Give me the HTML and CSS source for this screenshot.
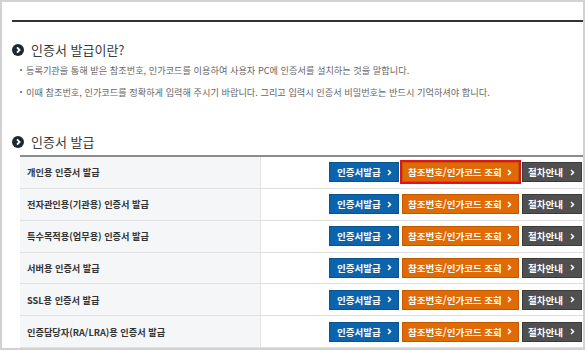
FILE: index.html
```html
<!DOCTYPE html>
<html lang="ko">
<head>
    <meta charset="utf-8">
    <title>인증서 발급</title>
    <link rel="stylesheet" href="styles.css">
</head>
<body>
    <div class="page">
        <div class="topline"></div>

        <h2 class="title">
            <svg class="title-icon" width="12" height="12" viewBox="0 0 12 12"><circle cx="6" cy="6" r="6" fill="#1f2731"/><path d="M5 3.4 L7.6 6 L5 8.6" fill="none" stroke="#fff" stroke-width="1.8"/></svg>
            인증서 발급이란?
        </h2>
        <ul class="notes">
            <li>등록기관을 통해 받은 참조번호, 인가코드를 이용하여 사용자 PC에 인증서를 설치하는 것을 말합니다.</li>
            <li>이때 참조번호, 인가코드를 정확하게 입력해 주시기 바랍니다. 그리고 입력시 인증서 비밀번호는 반드시 기억하셔야 합니다.</li>
        </ul>

        <h2 class="title second">
            <svg class="title-icon" width="12" height="12" viewBox="0 0 12 12"><circle cx="6" cy="6" r="6" fill="#1f2731"/><path d="M5 3.4 L7.6 6 L5 8.6" fill="none" stroke="#fff" stroke-width="1.8"/></svg>
            인증서 발급
        </h2>

        <div class="cert-list">
            <div class="cert-row">
                <div class="cert-name">개인용 인증서 발급</div>
                <div class="cert-btns">
                    <a class="btn blue">인증서발급 <svg width="5" height="7" viewBox="0 0 5 7"><path d="M1 1 L3.5 3.5 L1 6" fill="none" stroke="#fff" stroke-width="1.5"/></svg></a>
                    <a class="btn orange selected">참조번호/인가코드 조회 <svg width="5" height="7" viewBox="0 0 5 7"><path d="M1 1 L3.5 3.5 L1 6" fill="none" stroke="#fff" stroke-width="1.5"/></svg></a>
                    <a class="btn gray">절차안내 <svg width="5" height="7" viewBox="0 0 5 7"><path d="M1 1 L3.5 3.5 L1 6" fill="none" stroke="#fff" stroke-width="1.5"/></svg></a>
                </div>
            </div>
            <div class="cert-row">
                <div class="cert-name">전자관인용(기관용) 인증서 발급</div>
                <div class="cert-btns">
                    <a class="btn blue">인증서발급 <svg width="5" height="7" viewBox="0 0 5 7"><path d="M1 1 L3.5 3.5 L1 6" fill="none" stroke="#fff" stroke-width="1.5"/></svg></a>
                    <a class="btn orange">참조번호/인가코드 조회 <svg width="5" height="7" viewBox="0 0 5 7"><path d="M1 1 L3.5 3.5 L1 6" fill="none" stroke="#fff" stroke-width="1.5"/></svg></a>
                    <a class="btn gray">절차안내 <svg width="5" height="7" viewBox="0 0 5 7"><path d="M1 1 L3.5 3.5 L1 6" fill="none" stroke="#fff" stroke-width="1.5"/></svg></a>
                </div>
            </div>
            <div class="cert-row">
                <div class="cert-name">특수목적용(업무용) 인증서 발급</div>
                <div class="cert-btns">
                    <a class="btn blue">인증서발급 <svg width="5" height="7" viewBox="0 0 5 7"><path d="M1 1 L3.5 3.5 L1 6" fill="none" stroke="#fff" stroke-width="1.5"/></svg></a>
                    <a class="btn orange">참조번호/인가코드 조회 <svg width="5" height="7" viewBox="0 0 5 7"><path d="M1 1 L3.5 3.5 L1 6" fill="none" stroke="#fff" stroke-width="1.5"/></svg></a>
                    <a class="btn gray">절차안내 <svg width="5" height="7" viewBox="0 0 5 7"><path d="M1 1 L3.5 3.5 L1 6" fill="none" stroke="#fff" stroke-width="1.5"/></svg></a>
                </div>
            </div>
            <div class="cert-row">
                <div class="cert-name">서버용 인증서 발급</div>
                <div class="cert-btns">
                    <a class="btn blue">인증서발급 <svg width="5" height="7" viewBox="0 0 5 7"><path d="M1 1 L3.5 3.5 L1 6" fill="none" stroke="#fff" stroke-width="1.5"/></svg></a>
                    <a class="btn orange">참조번호/인가코드 조회 <svg width="5" height="7" viewBox="0 0 5 7"><path d="M1 1 L3.5 3.5 L1 6" fill="none" stroke="#fff" stroke-width="1.5"/></svg></a>
                    <a class="btn gray">절차안내 <svg width="5" height="7" viewBox="0 0 5 7"><path d="M1 1 L3.5 3.5 L1 6" fill="none" stroke="#fff" stroke-width="1.5"/></svg></a>
                </div>
            </div>
            <div class="cert-row">
                <div class="cert-name">SSL용 인증서 발급</div>
                <div class="cert-btns">
                    <a class="btn blue">인증서발급 <svg width="5" height="7" viewBox="0 0 5 7"><path d="M1 1 L3.5 3.5 L1 6" fill="none" stroke="#fff" stroke-width="1.5"/></svg></a>
                    <a class="btn orange">참조번호/인가코드 조회 <svg width="5" height="7" viewBox="0 0 5 7"><path d="M1 1 L3.5 3.5 L1 6" fill="none" stroke="#fff" stroke-width="1.5"/></svg></a>
                    <a class="btn gray">절차안내 <svg width="5" height="7" viewBox="0 0 5 7"><path d="M1 1 L3.5 3.5 L1 6" fill="none" stroke="#fff" stroke-width="1.5"/></svg></a>
                </div>
            </div>
            <div class="cert-row">
                <div class="cert-name">인증담당자(RA/LRA)용 인증서 발급</div>
                <div class="cert-btns">
                    <a class="btn blue">인증서발급 <svg width="5" height="7" viewBox="0 0 5 7"><path d="M1 1 L3.5 3.5 L1 6" fill="none" stroke="#fff" stroke-width="1.5"/></svg></a>
                    <a class="btn orange">참조번호/인가코드 조회 <svg width="5" height="7" viewBox="0 0 5 7"><path d="M1 1 L3.5 3.5 L1 6" fill="none" stroke="#fff" stroke-width="1.5"/></svg></a>
                    <a class="btn gray">절차안내 <svg width="5" height="7" viewBox="0 0 5 7"><path d="M1 1 L3.5 3.5 L1 6" fill="none" stroke="#fff" stroke-width="1.5"/></svg></a>
                </div>
            </div>
        </div>
    </div>
</body>
</html>
```

FILE: styles.css
```css
body {
    margin: 0;
    font-family: "Noto Sans CJK KR", "Noto Sans", sans-serif;
    background: #fff;
}
.page {
    width: 585px;
    height: 350px;
    box-sizing: border-box;
    border: 2px solid #d2d2d2;
    padding: 18px 0 0 10px;
    display: flex;
    flex-direction: column;
}
.topline {
    height: 2px;
    background: #333;
}
.title {
    display: flex;
    align-items: center;
    gap: 7px;
    margin: 20px 0 0 0;
    height: 16px;
    font-size: 13px;
    font-weight: normal;
    color: #3b3b3b;
    line-height: 16px;
}
.title.second {
    margin-top: 31px;
}
.title-icon {
    flex: none;
}
.notes {
    list-style: none;
    margin: 1px 0 0 0;
    padding: 0 0 0 8px;
}
.notes li {
    position: relative;
    padding-left: 6px;
    font-size: 9.2px;
    line-height: 22px;
    color: #666;
}
.notes li:before {
    content: "";
    position: absolute;
    left: 0;
    top: 10px;
    width: 2px;
    height: 2px;
    background: #888;
}
.cert-list {
    margin: 5px 0 0 8px;
    border-top: 2px solid #8c8c8c;
    flex: 1;
    display: grid;
    grid-template-rows: repeat(6, 1fr);
}
.cert-row {
    display: flex;
    border-bottom: 1px solid #e0e0e0;
}
.cert-name {
    width: 241px;
    box-sizing: border-box;
    padding-left: 7px;
    background: #f5f6f8;
    border-right: 1px solid #e3e3e3;
    display: flex;
    align-items: center;
    font-size: 9.2px;
    font-weight: bold;
    color: #333;
}
.cert-btns {
    flex: 1;
    display: flex;
    align-items: center;
    justify-content: flex-end;
    gap: 3px;
    padding-right: 1px;
}
.btn {
    display: flex;
    align-items: center;
    justify-content: space-between;
    box-sizing: border-box;
    height: 20px;
    padding: 0 6px 0 7px;
    font-size: 9.5px;
    font-weight: bold;
    color: #fff;
    white-space: nowrap;
}
.btn.blue {
    width: 70px;
    background: #0b64ac;
    border: 1px solid #08548f;
}
.btn.orange {
    width: 117px;
    padding-left: 5px;
    background: #e06b06;
    border: 1px solid #c45a00;
}
.btn.gray {
    width: 60px;
    padding-left: 5px;
    background: #505050;
    border: 1px solid #3a3a3a;
}
.btn.selected {
    outline: 2px solid #e5121c;
}
```
